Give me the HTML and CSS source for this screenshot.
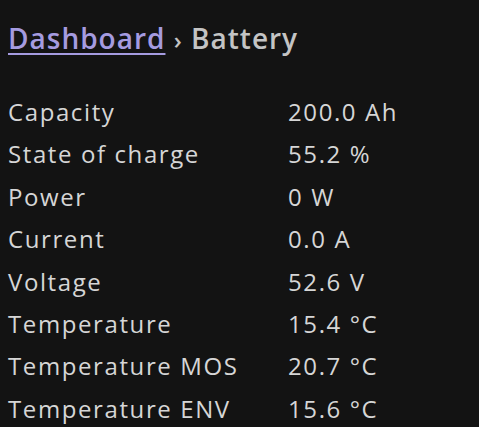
FILE: index.html
```html
<!DOCTYPE html>
<html lang="en">
<head>
    <meta charset="UTF-8">
    <meta name="viewport" content="width=device-width, initial-scale=1.0">
    <title>Battery</title>
    <link rel="stylesheet" href="styles.css">
</head>
<body>
    <h1 class="crumbs"><a href="#">Dashboard</a> <span class="sep">›</span> Battery</h1>

    <table class="stats">
        <tr><td>Capacity</td><td>200.0 Ah</td></tr>
        <tr><td>State of charge</td><td>55.2 %</td></tr>
        <tr><td>Power</td><td>0 W</td></tr>
        <tr><td>Current</td><td>0.0 A</td></tr>
        <tr><td>Voltage</td><td>52.6 V</td></tr>
        <tr><td>Temperature</td><td>15.4 °C</td></tr>
        <tr><td>Temperature MOS</td><td>20.7 °C</td></tr>
        <tr><td>Temperature ENV</td><td>15.6 °C</td></tr>
    </table>
</body>
</html>
```

FILE: styles.css
```css
html, body {
    background-color: #131313;
}
body {
    margin: 0;
    padding: 0 8px;
    font-family: "Open Sans", sans-serif;
    color: #d6d6d6;
}
.crumbs {
    font-size: 28px;
    font-weight: 600;
    color: #c4c4c4;
    margin: 0;
    padding-top: 18px;
    height: 40px;
    line-height: 40px;
    letter-spacing: 1px;
}
.crumbs a {
    color: #a59be0;
    text-decoration-thickness: 2px;
    text-underline-offset: 4px;
}
.crumbs .sep {
    font-size: 24px;
}
.stats {
    border-collapse: collapse;
    margin-top: 33px;
    font-size: 24px;
    letter-spacing: 1.6px;
}
.stats td {
    padding: 0;
    height: 42.4px;
    line-height: 42.4px;
    white-space: nowrap;
}
.stats td:first-child {
    width: 280px;
}
```
